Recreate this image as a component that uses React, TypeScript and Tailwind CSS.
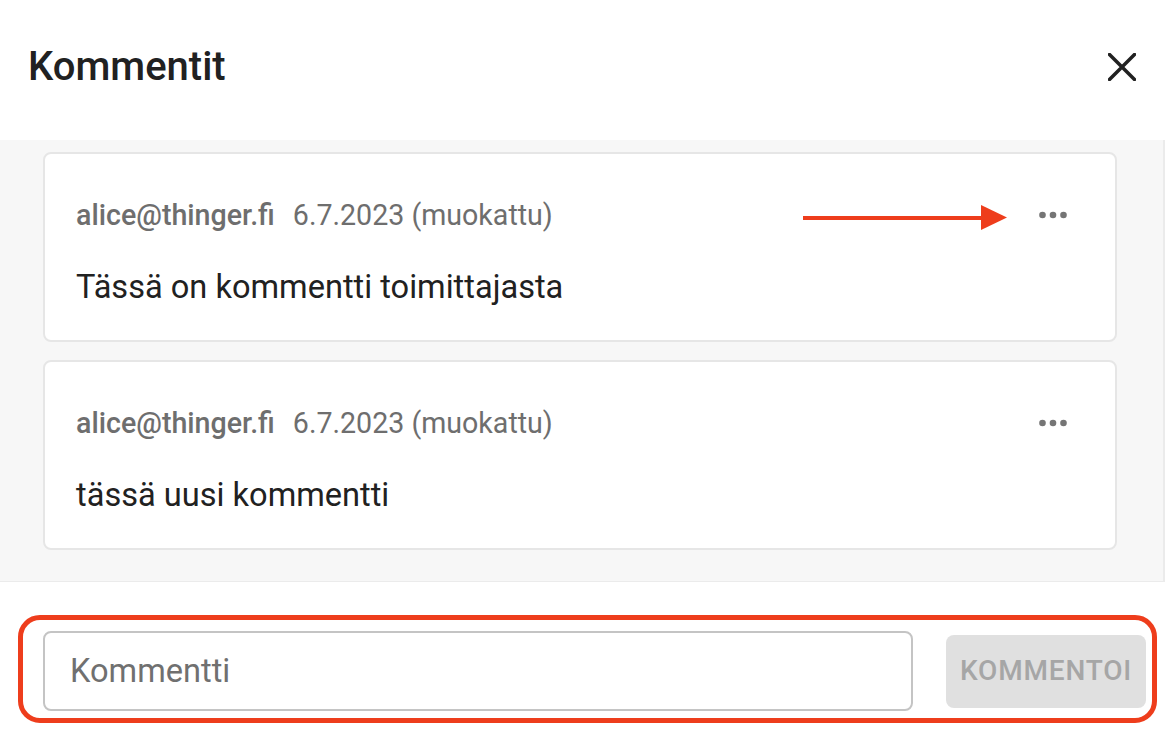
import React from 'react';

type Comment = {
  author: string;
  date: string;
  text: string;
};

const comments: Comment[] = [
  { author: 'alice@thinger.fi', date: '6.7.2023 (muokattu)', text: 'Tässä on kommentti toimittajasta' },
  { author: 'alice@thinger.fi', date: '6.7.2023 (muokattu)', text: 'tässä uusi kommentti' },
];

const MoreDots = () => (
  <svg width="28" height="8" viewBox="0 0 28 8" className="mr-[16px]">
    <circle cx="3.5" cy="4" r="3.3" fill="#757575" />
    <circle cx="14" cy="4" r="3.3" fill="#757575" />
    <circle cx="24.5" cy="4" r="3.3" fill="#757575" />
  </svg>
);

const CommentCard = ({ comment }: { comment: Comment }) => (
  <div className="rounded-[8px] border-2 border-[#e6e6e6] bg-white pt-[41px] pb-[33px] pl-[31px] pr-8">
    <div className="flex h-[40px] items-center justify-between">
      <div className="flex items-center text-[28.6px] leading-[40px] text-[#6e6e6e]">
        <span className="font-medium">{comment.author}</span>
        <span className="ml-[18px]">{comment.date}</span>
      </div>
      <MoreDots />
    </div>
    <div className="mt-8 h-[40px] text-[32.6px] leading-[40px] text-[#212121]">{comment.text}</div>
  </div>
);

export default function App() {
  return (
    <div
      className="relative h-[752px] w-[1168px] overflow-hidden bg-white"
      style={{ fontFamily: 'Roboto, "Liberation Sans", sans-serif' }}
    >
      {/* header */}
      <div className="flex h-[140px] items-center justify-between pl-[28px] pr-[31px] pb-[6px]">
        <h1 className="text-[40px] font-medium text-[#212121]">Kommentit</h1>
        <button className="flex h-[30px] w-[30px] items-center justify-center">
          <svg width="28" height="28" viewBox="0 0 28 28">
            <path d="M1.5 1.5 L26.5 26.5 M26.5 1.5 L1.5 26.5" stroke="#212121" strokeWidth="3.5" strokeLinecap="square" />
          </svg>
        </button>
      </div>

      {/* comment list */}
      <div className="mr-[3px] flex flex-col gap-[18px] border-r-2 border-b border-[#ebebeb] bg-[#f7f7f7] pt-[12px] pb-[31px] pl-[43px] pr-[46px]">
        {comments.map((c, i) => (
          <CommentCard key={i} comment={c} />
        ))}
      </div>

      {/* input row */}
      <div className="flex items-center pt-[49px] pl-[43px] pr-[22px]">
        <input
          placeholder="Kommentti"
          className="h-[80px] w-[870px] rounded-[8px] border-2 border-[#c4c4c4] bg-white pl-[25px] text-[32.6px] text-[#212121] outline-none placeholder:text-[#707070]"
        />
        <button
          disabled
          className="ml-[33px] h-[73px] w-[200px] rounded-[8px] bg-[#e0e0e0] text-[28px] font-medium tracking-[0.8px] text-[#a6a6a6]"
        >
          KOMMENTOI
        </button>
      </div>

      {/* annotations */}
      <div className="pointer-events-none absolute left-[803px] top-[205px] flex items-center">
        <div className="h-[4px] w-[178px] bg-[#ee3d1c]" />
        <svg width="26" height="25" viewBox="0 0 26 25">
          <path d="M0 0 L26 12.5 L0 25 Z" fill="#ee3d1c" />
        </svg>
      </div>
      <div className="pointer-events-none absolute left-[18px] top-[615px] h-[108px] w-[1139px] rounded-[22px] border-[5px] border-[#ee3d1c]" />
    </div>
  );
}
